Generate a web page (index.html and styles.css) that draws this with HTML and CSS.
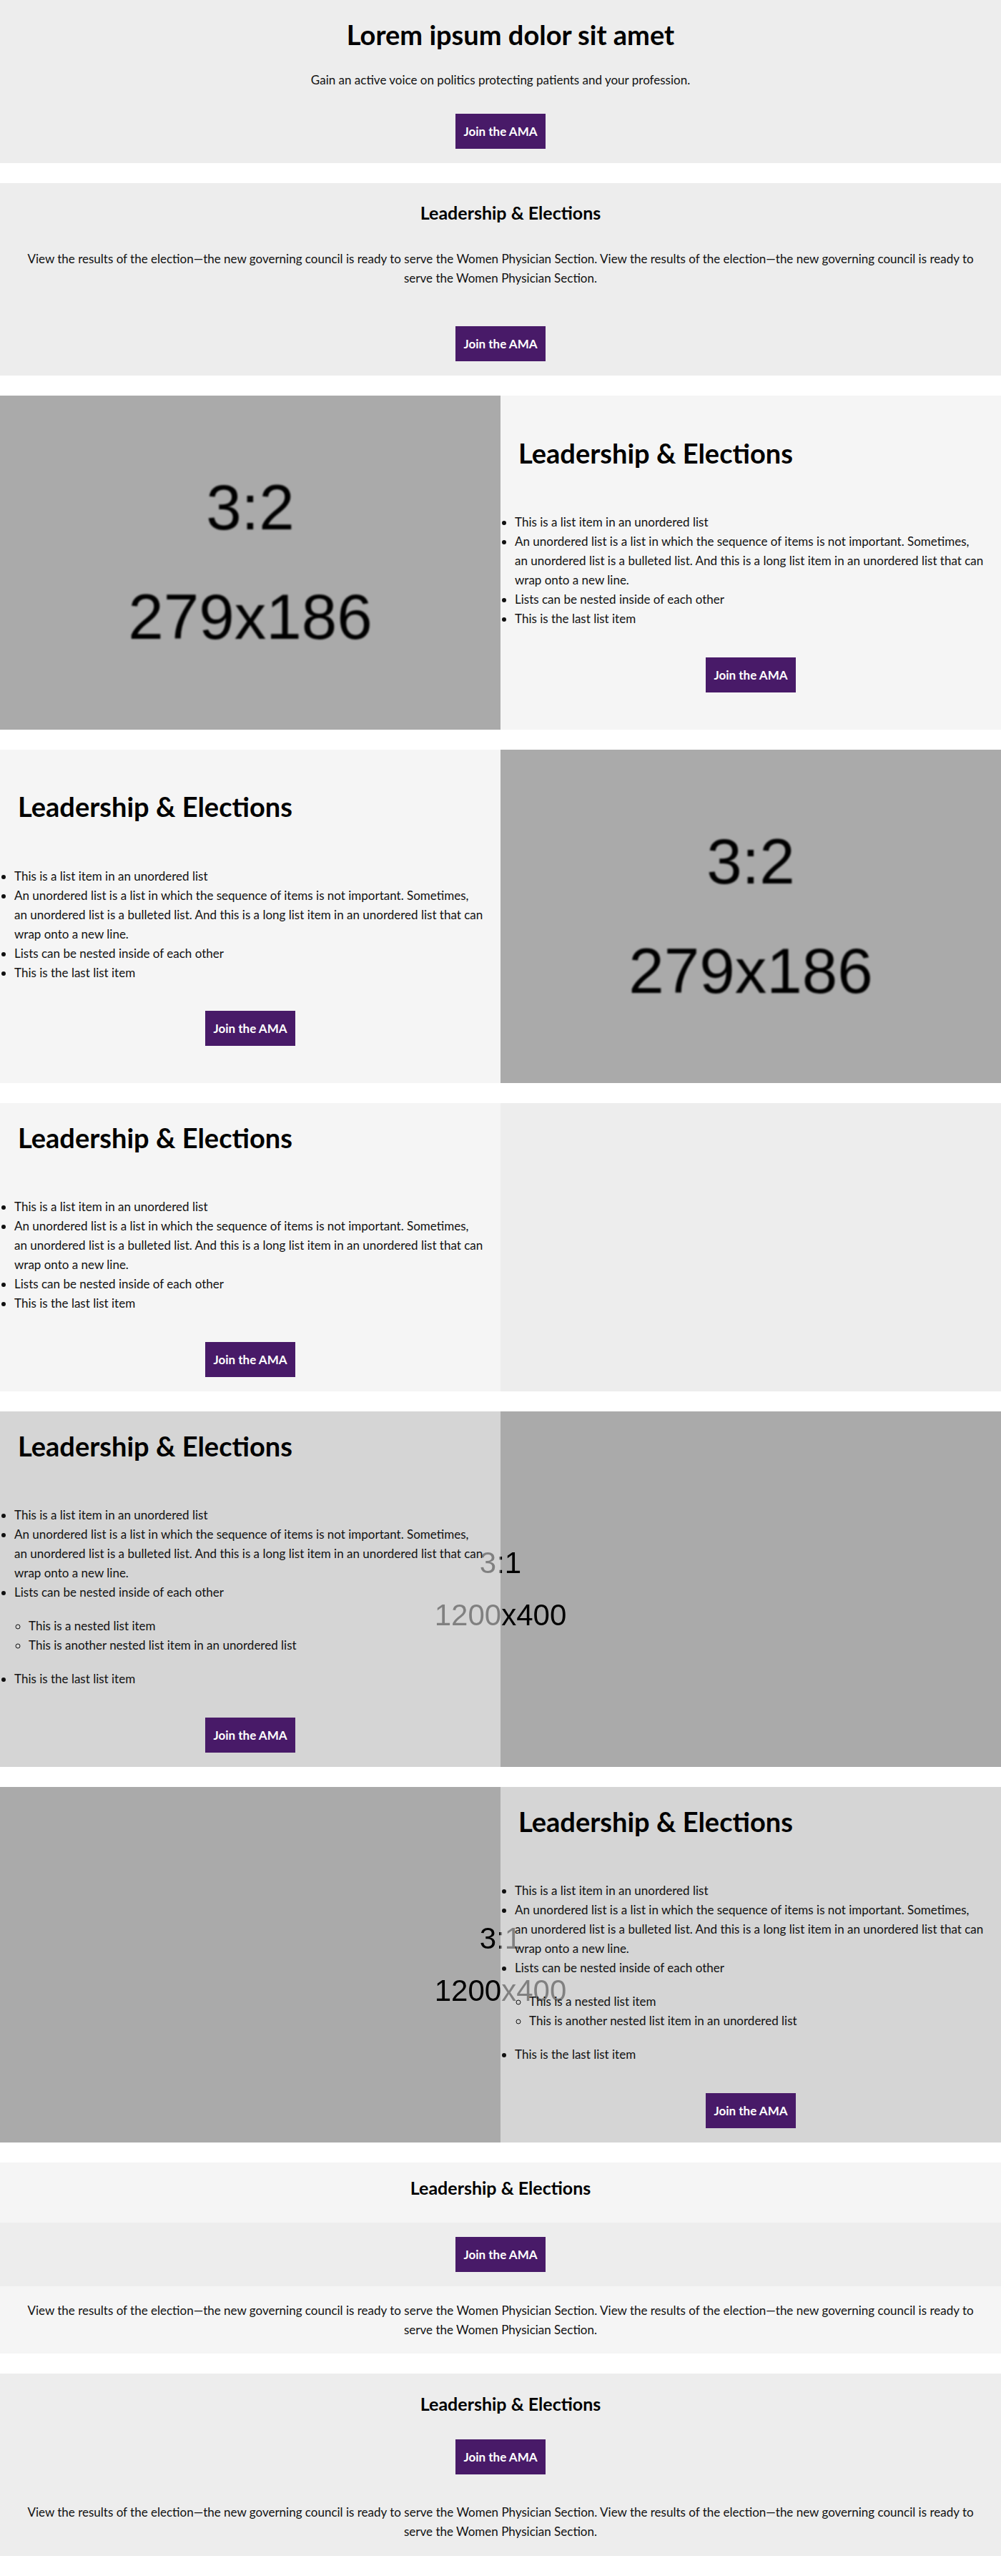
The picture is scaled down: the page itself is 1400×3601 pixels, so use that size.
FILE: index.html
```html
<!DOCTYPE html>
<html lang="en">
<head>
<meta charset="utf-8">
<title>Leadership &amp; Elections</title>
<link rel="stylesheet" href="styles.css">
</head>
<body>

<section class="hero">
  <h1 class="hero__title">Lorem ipsum dolor sit amet</h1>
  <p class="hero__text">Gain an active voice on politics protecting patients and your profession.</p>
  <a class="btn hero__btn" href="#">Join the AMA</a>
</section>

<section class="banner">
  <h2 class="banner__title">Leadership &amp; Elections</h2>
  <p class="banner__text">View the results of the election—the new governing council is ready to serve the Women Physician Section. View the results of the election—the new governing council is ready to serve the Women Physician Section.</p>
  <a class="btn banner__btn" href="#">Join the AMA</a>
</section>

<section class="split">
  <div class="placeholder placeholder--wide"><span>3:2</span><span>279x186</span></div>
  <div class="split__body">
    <h2 class="split__title">Leadership &amp; Elections</h2>
    <ul class="list">
      <li>This is a list item in an unordered list</li>
      <li>An unordered list is a list in which the sequence of items is not important. Sometimes,<br>an unordered list is a bulleted list. And this is a long list item in an unordered list that can wrap onto a new line.</li>
      <li>Lists can be nested inside of each other</li>
      <li>This is the last list item</li>
    </ul>
    <a class="btn split__btn" href="#">Join the AMA</a>
  </div>
</section>

<section class="split">
  <div class="split__body">
    <h2 class="split__title">Leadership &amp; Elections</h2>
    <ul class="list">
      <li>This is a list item in an unordered list</li>
      <li>An unordered list is a list in which the sequence of items is not important. Sometimes,<br>an unordered list is a bulleted list. And this is a long list item in an unordered list that can wrap onto a new line.</li>
      <li>Lists can be nested inside of each other</li>
      <li>This is the last list item</li>
    </ul>
    <a class="btn split__btn" href="#">Join the AMA</a>
  </div>
  <div class="placeholder placeholder--wide"><span>3:2</span><span>279x186</span></div>
</section>

<section class="split">
  <div class="split__body">
    <h2 class="split__title">Leadership &amp; Elections</h2>
    <ul class="list">
      <li>This is a list item in an unordered list</li>
      <li>An unordered list is a list in which the sequence of items is not important. Sometimes,<br>an unordered list is a bulleted list. And this is a long list item in an unordered list that can wrap onto a new line.</li>
      <li>Lists can be nested inside of each other</li>
      <li>This is the last list item</li>
    </ul>
    <a class="btn split__btn" href="#">Join the AMA</a>
  </div>
  <div class="split__aside"></div>
</section>

<section class="split split--overlay">
  <div class="placeholder placeholder--bg"><span>3:1</span><span>1200x400</span></div>
  <div class="split__body split__body--veil">
    <h2 class="split__title">Leadership &amp; Elections</h2>
    <ul class="list">
      <li>This is a list item in an unordered list</li>
      <li>An unordered list is a list in which the sequence of items is not important. Sometimes,<br>an unordered list is a bulleted list. And this is a long list item in an unordered list that can wrap onto a new line.</li>
      <li>Lists can be nested inside of each other
        <ul class="list list--nested">
          <li>This is a nested list item</li>
          <li>This is another nested list item in an unordered list</li>
        </ul>
      </li>
      <li>This is the last list item</li>
    </ul>
    <a class="btn split__btn" href="#">Join the AMA</a>
  </div>
  <div class="split__aside split__aside--clear"></div>
</section>

<section class="split split--overlay">
  <div class="placeholder placeholder--bg"><span>3:1</span><span>1200x400</span></div>
  <div class="split__aside split__aside--clear"></div>
  <div class="split__body split__body--veil">
    <h2 class="split__title">Leadership &amp; Elections</h2>
    <ul class="list">
      <li>This is a list item in an unordered list</li>
      <li>An unordered list is a list in which the sequence of items is not important. Sometimes,<br>an unordered list is a bulleted list. And this is a long list item in an unordered list that can wrap onto a new line.</li>
      <li>Lists can be nested inside of each other
        <ul class="list list--nested">
          <li>This is a nested list item</li>
          <li>This is another nested list item in an unordered list</li>
        </ul>
      </li>
      <li>This is the last list item</li>
    </ul>
    <a class="btn split__btn" href="#">Join the AMA</a>
  </div>
</section>

<section class="stack">
  <div class="stack__head">
    <h2 class="stack__title">Leadership &amp; Elections</h2>
  </div>
  <div class="stack__action">
    <a class="btn" href="#">Join the AMA</a>
  </div>
  <div class="stack__copy">
    <p class="stack__text">View the results of the election—the new governing council is ready to serve the Women Physician Section. View the results of the election—the new governing council is ready to serve the Women Physician Section.</p>
  </div>
</section>

<section class="banner banner--cta-first">
  <h2 class="banner__title">Leadership &amp; Elections</h2>
  <a class="btn banner__btn" href="#">Join the AMA</a>
  <p class="banner__text">View the results of the election—the new governing council is ready to serve the Women Physician Section. View the results of the election—the new governing council is ready to serve the Women Physician Section.</p>
</section>

</body>
</html>
```
FILE: styles.css
```css
* { box-sizing: border-box; }

html, body {
  margin: 0;
  padding: 0;
  background: #fff;
}

body {
  font-family: Lato, "Open Sans", sans-serif;
  font-size: 17px;
  line-height: 27px;
  color: #111;
}

/* ---------- shared ---------- */
.btn {
  display: inline-block;
  background: #481a68;
  color: #fff;
  font-family: Lato, sans-serif;
  font-weight: 700;
  font-size: 17px;
  line-height: 27px;
  padding: 11px 11px;
  text-decoration: none;
  white-space: nowrap;
}

h1, h2 {
  color: #000;
  font-weight: 700;
  margin: 0;
}

/* ---------- hero ---------- */
.hero {
  background: #ededed;
  margin-bottom: 28px;
  padding: 26px 0 20px;
  display: flex;
  flex-direction: column;
  align-items: center;
  text-align: center;
}
.hero__title {
  font-size: 38px;
  line-height: 45.6px;
  padding-left: 28px;
}
.hero__text {
  margin: 26.6px 0 0;
}
.hero__btn {
  margin-top: 33.8px;
}

/* ---------- banner ---------- */
.banner {
  background: #ededed;
  margin-bottom: 28px;
  padding: 26px 32px 20px;
  display: flex;
  flex-direction: column;
  align-items: center;
  text-align: center;
}
.banner__title {
  font-size: 25px;
  line-height: 30px;
  padding-left: 28px;
}
.banner__text {
  margin: 36px 0 0;
}
.banner__btn {
  margin-top: 54px;
}
.banner--cta-first {
  padding: 27px 32px 21px;
}
.banner--cta-first .banner__btn {
  margin-top: 34.75px;
}
.banner--cta-first .banner__text {
  margin-top: 39px;
}

/* ---------- split ---------- */
.split {
  position: relative;
  display: grid;
  grid-template-columns: 1fr 1fr;
  margin-bottom: 28px;
}
.split__body {
  position: relative;
  z-index: 1;
  background: #f5f5f5;
  display: flex;
  flex-direction: column;
  justify-content: center;
  padding: 26px 0 20px;
}
.split__body--veil {
  background: rgba(255, 255, 255, 0.5);
}
.split__aside {
  background: #ededed;
}
.split__aside--clear {
  background: transparent;
}
.split__title {
  font-size: 38px;
  line-height: 45.6px;
  padding-left: 25px;
}
.split__btn {
  align-self: center;
  margin-top: 40.8px;
}

.list {
  margin: 59.6px 0 0;
  padding: 0 20px;
  list-style: disc outside;
}
.list--nested {
  margin: 20px 0;
  padding: 0 0 0 20px;
  list-style: circle outside;
}

/* ---------- placeholder images ---------- */
.placeholder {
  background: #aaa;
  color: #000;
  font-family: "Liberation Sans", Arial, sans-serif;
  display: flex;
  flex-direction: column;
  align-items: center;
  justify-content: center;
  overflow: hidden;
}
.placeholder span {
  display: block;
  white-space: nowrap;
}
.placeholder--wide {
  aspect-ratio: 3 / 2;
  font-size: 89px;
  line-height: 89px;
  gap: 64.3px;
}
.placeholder--wide span {
  filter: blur(0.9px);
}
.placeholder--bg {
  position: absolute;
  inset: 0;
  z-index: 0;
  font-size: 42px;
  line-height: 42px;
  gap: 30.7px;
}
.placeholder--bg span {
  filter: blur(0.4px);
}

/* ---------- stacked ---------- */
.stack {
  margin-bottom: 28px;
  text-align: center;
}
.stack__head {
  background: #f5f5f5;
  padding: 19.3px 0 34.3px;
}
.stack__title {
  font-size: 25px;
  line-height: 30px;
}
.stack__action {
  background: #ededed;
  padding: 20px 0;
}
.stack__copy {
  background: #f5f5f5;
  padding: 20.25px 32px;
}
.stack__text {
  margin: 0;
}
```
